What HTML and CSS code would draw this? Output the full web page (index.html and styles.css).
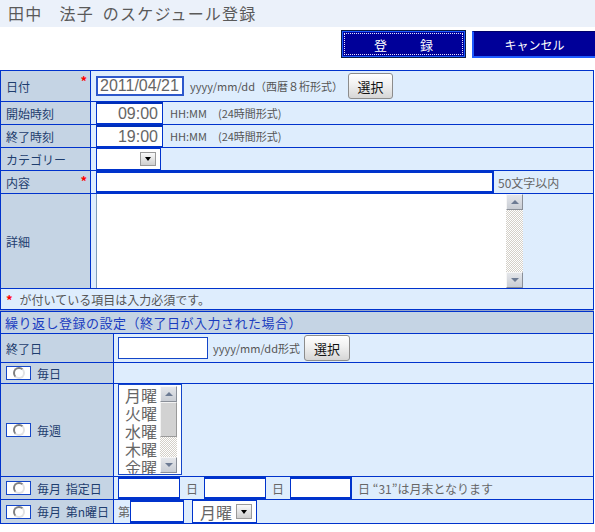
FILE: index.html
```html
<!DOCTYPE html>
<html lang="ja">
<head>
<meta charset="utf-8">
<title>スケジュール登録</title>
<link rel="stylesheet" href="styles.css">
</head>
<body>
<header class="title">田中　法子 のスケジュール登録</header>
<div class="actions">
  <button class="act act-ok" type="button"><span class="focus-ring">登　録</span></button>
  <button class="act act-cancel" type="button">キャンセル</button>
</div>

<div class="form-grid main">
  <div class="lbl">日付<span class="req">*</span></div>
  <div class="val pad5">
    <input class="date-in" type="text" value="2011/04/21">
    <span class="hint hint-date">yyyy/mm/dd（西暦８桁形式）</span>
    <button class="pick pick-date" type="button">選択</button>
  </div>

  <div class="lbl">開始時刻</div>
  <div class="val pad5">
    <input class="time-in" type="text" value="09:00">
    <span class="hint hint-time">HH:MM　(24時間形式)</span>
  </div>

  <div class="lbl">終了時刻</div>
  <div class="val pad5">
    <input class="time-in" type="text" value="19:00">
    <span class="hint hint-time">HH:MM　(24時間形式)</span>
  </div>

  <div class="lbl">カテゴリー</div>
  <div class="val pad5">
    <div class="combo combo-cat"><span class="arrow"></span></div>
  </div>

  <div class="lbl">内容<span class="req">*</span></div>
  <div class="val pad5 stretch">
    <input class="content-in" type="text" value="">
    <div class="count">50文字以内</div>
  </div>

  <div class="lbl">詳細</div>
  <div class="val pad5 stretch">
    <div class="memo">
      <div class="vscroll">
        <span class="sb-btn sb-up"></span>
        <span class="sb-fill"></span>
        <span class="sb-btn sb-down"></span>
      </div>
    </div>
  </div>

  <div class="note"><span class="req-inline">*</span>が付いている項目は入力必須です。</div>
</div>

<div class="sep"></div>

<div class="form-grid repeat">
  <div class="sect">繰り返し登録の設定（終了日が入力された場合）</div>

  <div class="lbl">終了日</div>
  <div class="val pad4">
    <input class="end-in" type="text" value="">
    <span class="hint hint-end">yyyy/mm/dd形式</span>
    <button class="pick pick-end" type="button">選択</button>
  </div>

  <div class="lbl opt"><span class="radio-box"><span class="radio"></span></span>毎日</div>
  <div class="val"></div>

  <div class="lbl opt"><span class="radio-box"><span class="radio"></span></span>毎週</div>
  <div class="val pad4 top">
    <div class="listbox">
      <div class="opts">
        <div>月曜</div>
        <div>火曜</div>
        <div>水曜</div>
        <div>木曜</div>
        <div>金曜</div>
      </div>
      <div class="vscroll list-scroll">
        <span class="sb-btn sb-up"></span>
        <span class="sb-thumb"></span>
        <span class="sb-fill"></span>
        <span class="sb-btn sb-down"></span>
      </div>
    </div>
  </div>

  <div class="lbl opt"><span class="radio-box"><span class="radio"></span></span>毎月 指定日</div>
  <div class="val pad4 stretch">
    <input class="day-in" type="text" value="">
    <span class="day-unit">日</span>
    <input class="day-in" type="text" value="">
    <span class="day-unit">日</span>
    <input class="day-in day-in-last" type="text" value="">
    <div class="day-note">日 “31”は月末となります</div>
  </div>

  <div class="lbl opt"><span class="radio-box"><span class="radio"></span></span>毎月 第n曜日</div>
  <div class="val pad4 stretch">
    <span class="nth-prefix">第</span>
    <input class="nth-in" type="text" value="">
    <div class="combo combo-week"><span class="combo-text">月曜</span><span class="arrow"></span></div>
  </div>
</div>
</body>
</html>
```

FILE: styles.css
```css
* {
  box-sizing: border-box;
}

body {
  margin: 0;
  width: 595px;
  background: #fff;
  font-family: "Noto Sans CJK JP", sans-serif;
  font-size: 12px;
  color: #555;
}

/* ---------- title bar ---------- */
.title {
  display: block;
  height: 27px;
  line-height: 27px;
  padding-left: 8px;
  background: #ebf1fa;
  color: #5a5a5a;
  font-size: 16px;
  letter-spacing: 1.2px;
  word-spacing: 4px;
}

/* ---------- top buttons ---------- */
.actions {
  height: 43px;
  display: flex;
  justify-content: flex-end;
  align-items: flex-start;
  gap: 6px;
  padding-top: 3px;
}

.act {
  margin: 0;
  padding: 0;
  font-family: inherit;
  font-size: 12px;
  color: #fff;
  background: #000099;
}

.act-ok {
  width: 125px;
  height: 28px;
  padding: 2px;
  border: 1px solid #0b1a44;
  box-shadow: inset 0 0 0 1px #1c5cff;
}

.focus-ring {
  display: flex;
  align-items: center;
  justify-content: center;
  height: 100%;
  border: 1px dotted #e6e6ff;
  padding-left: 10px;
  font-size: 13px;
  letter-spacing: 10px;
}

.act-cancel {
  width: 123px;
  height: 27px;
  margin-top: 1px;
  border: none;
  border-top: 1px solid #00006a;
  border-left: 2px solid #1f5cff;
  border-bottom: 2px solid #1f5cff;
}

/* ---------- grids ---------- */
.form-grid {
  display: grid;
  width: 594px;
  gap: 1px;
  padding: 1px;
  background: #0033cc;
}

.main {
  grid-template-columns: 89px 1fr;
  grid-template-rows: 30px 22px 22px 22px 22px 94px 20px;
}

.repeat {
  grid-template-columns: 112px 1fr;
  grid-template-rows: 21px 28px 20px 92px 22px 23px;
}

.sep {
  width: 594px;
  height: 1px;
  background: #97a3c6;
}

.lbl {
  display: flex;
  align-items: center;
  justify-content: space-between;
  padding-left: 5px;
  background: #c5d4e4;
  color: #1e3d6e;
  white-space: nowrap;
}

.req {
  align-self: flex-start;
  margin-top: 3px;
  margin-right: 3px;
  color: #f00;
  font-size: 13px;
  line-height: 13px;
  font-weight: bold;
}

.val {
  display: flex;
  align-items: center;
  min-width: 0;
  background: #deedfd;
  white-space: nowrap;
}

.pad5 { padding-left: 5px; }
.pad4 { padding-left: 4px; }
.stretch { align-items: stretch; }
.top { align-items: flex-start; }

input {
  margin: 0;
  background: #fff;
  font-family: "Liberation Sans", Arial, sans-serif;
  font-size: 16px;
  color: #666;
  outline: none;
  border-radius: 0;
}

.hint {
  font-size: 11px;
  color: #555;
}

.pick {
  width: 45px;
  height: 26px;
  margin: 0;
  padding: 0;
  border: 1px solid #8c8c8c;
  border-radius: 3px;
  background: linear-gradient(#ffffff, #f0f0f0 45%, #d6d6d6);
  font-family: inherit;
  font-size: 13px;
  color: #111;
}

.pick-date { margin-left: 5px; }

/* row: date */
.date-in {
  width: 88px;
  height: 20px;
  padding: 0 0 0 2px;
  border: 2px solid #2d58cc;
}
.hint-date { margin-left: 6px; }

/* row: time */
.time-in {
  width: 67px;
  height: 22px;
  padding: 0 4px 0 0;
  border: 1px solid #0033cc;
  border-top: 2px solid #002fb8;
  text-align: right;
}
.hint-time { margin-left: 7px; }

/* combos */
.combo {
  display: flex;
  align-items: center;
  justify-content: flex-end;
  width: 65px;
  height: 22px;
  padding-right: 4px;
  border: 1px solid #0033cc;
  background: #fff;
}

.arrow {
  display: flex;
  align-items: center;
  justify-content: center;
  width: 16px;
  height: 14px;
  border: 1px solid #9a9a9a;
  background: linear-gradient(#fafafa, #cfcfcf);
}

.arrow::after {
  content: "";
  border-left: 3.5px solid transparent;
  border-right: 3.5px solid transparent;
  border-top: 4px solid #000;
}

/* row: content */
.content-in {
  width: 397px;
  padding: 0 3px;
  border: 1px solid #0033cc;
  border-top-width: 2px;
  border-bottom-width: 2px;
}

.count {
  flex: 1;
  display: flex;
  align-items: center;
  padding-left: 4px;
  border-left: 1px solid #0033cc;
  color: #666;
}

/* row: memo */
.memo {
  display: flex;
  justify-content: flex-end;
  width: 427px;
  background: #fff;
  border-left: 1px solid #7f9db9;
}

.vscroll {
  display: flex;
  flex-direction: column;
  width: 17px;
  background: repeating-conic-gradient(#d4d0c8 0 25%, #ffffff 0 50%) 0 0 / 2px 2px;
}

.sb-btn {
  display: flex;
  align-items: center;
  justify-content: center;
  height: 16px;
  background: linear-gradient(#e4e6ea, #c9cdd4);
  border: 1px solid;
  border-color: #f6f6f6 #8a8f98 #8a8f98 #f6f6f6;
}

.sb-up::after {
  content: "";
  border-left: 4px solid transparent;
  border-right: 4px solid transparent;
  border-bottom: 4px solid #6d7b93;
}

.sb-down::after {
  content: "";
  border-left: 4px solid transparent;
  border-right: 4px solid transparent;
  border-top: 4px solid #6d7b93;
}

.sb-fill { flex: 1; }

.sb-thumb {
  height: 35px;
  background: #d2d2d2;
  border: 1px solid;
  border-color: #f2f2f2 #9a9a9a #9a9a9a #f2f2f2;
}

/* note */
.note {
  grid-column: 1 / -1;
  display: flex;
  align-items: center;
  padding-left: 5px;
  background: #deedfd;
  color: #555;
}

.req-inline {
  margin-right: 7px;
  color: #f00;
  font-weight: bold;
  font-size: 13px;
}

/* ---------- repeat section ---------- */
.sect {
  grid-column: 1 / -1;
  display: flex;
  align-items: center;
  padding-left: 4px;
  background: #c5d4e4;
  color: #1a3cc0;
  font-size: 13px;
  letter-spacing: 0.5px;
  white-space: nowrap;
}

.end-in {
  width: 90px;
  height: 22px;
  border: 1px solid #1446c8;
}
.hint-end { margin-left: 5px; }
.pick-end { width: 46px; margin-left: 4px; }

.opt {
  justify-content: flex-start;
  word-spacing: 2px;
}

.radio-box {
  display: flex;
  align-items: center;
  width: 25px;
  height: 14px;
  margin-right: 6px;
  padding-left: 6px;
  border: 1px solid #1446c8;
  background: #fff;
}

.radio {
  width: 12px;
  height: 12px;
  border-radius: 50%;
  border: 2px solid;
  border-color: #808080 #e2e2e2 #e2e2e2 #808080;
  background: #fff;
}

.listbox {
  display: flex;
  width: 64px;
  height: 91px;
  padding: 1px 4px 1px 0;
  border: 1px solid #1446c8;
  background: #fff;
  overflow: hidden;
}

.opts {
  flex: 1;
  padding-left: 6px;
  font-size: 16px;
  line-height: 18px;
  color: #666;
}

.list-scroll {
  height: 87px;
}

.day-in {
  width: 62px;
  border: 1px solid #0033cc;
  border-top-width: 2px;
  border-bottom-width: 2px;
}
.day-in-last { width: 61px; }

.day-unit {
  display: flex;
  align-items: center;
  justify-content: center;
  width: 24px;
  color: #666;
}

.day-note {
  flex: 1;
  display: flex;
  align-items: center;
  padding-left: 6px;
  border-left: 1px solid #0033cc;
  color: #666;
}

.nth-prefix {
  display: flex;
  align-items: center;
  width: 12px;
  color: #666;
}

.nth-in {
  width: 54px;
  border: 1px solid #0033cc;
  border-top-width: 2px;
  border-bottom-width: 2px;
}

.combo-week {
  margin-left: 8px;
  height: auto;
  justify-content: space-between;
  padding-left: 7px;
}

.combo-text {
  font-size: 16px;
  color: #666;
}

.combo-week .arrow {
  height: 15px;
}
```
